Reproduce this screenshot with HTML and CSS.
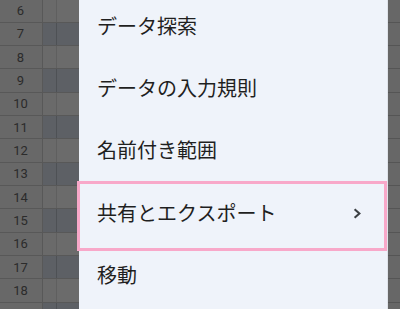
FILE: index.html
```html
<!DOCTYPE html>
<html lang="ja">
<head>
<meta charset="utf-8">
<link rel="stylesheet" href="styles.css">
</head>
<body>
<div class="screen">
  <div class="sheet">
    <div class="row"><div class="hdr">6</div><div class="ca"></div><div class="cb"></div></div>
    <div class="row dark"><div class="hdr">7</div><div class="ca"></div><div class="cb"></div></div>
    <div class="row"><div class="hdr">8</div><div class="ca"></div><div class="cb"></div></div>
    <div class="row dark"><div class="hdr">9</div><div class="ca"></div><div class="cb"></div></div>
    <div class="row"><div class="hdr">10</div><div class="ca"></div><div class="cb"></div></div>
    <div class="row dark"><div class="hdr">11</div><div class="ca"></div><div class="cb"></div></div>
    <div class="row"><div class="hdr">12</div><div class="ca"></div><div class="cb"></div></div>
    <div class="row dark"><div class="hdr">13</div><div class="ca"></div><div class="cb"></div></div>
    <div class="row"><div class="hdr">14</div><div class="ca"></div><div class="cb"></div></div>
    <div class="row dark"><div class="hdr">15</div><div class="ca"></div><div class="cb"></div></div>
    <div class="row"><div class="hdr">16</div><div class="ca"></div><div class="cb"></div></div>
    <div class="row dark"><div class="hdr">17</div><div class="ca"></div><div class="cb"></div></div>
    <div class="row"><div class="hdr">18</div><div class="ca"></div><div class="cb"></div></div>
    <div class="row dark"><div class="hdr"></div><div class="ca"></div><div class="cb"></div></div>
  </div>
  <div class="menu">
    <ul class="items">
      <li class="item">データ探索</li>
      <li class="item">データの入力規則</li>
      <li class="item">名前付き範囲</li>
      <li class="item">共有とエクスポート
        <svg class="chev" viewBox="0 0 9 11" width="9" height="11"><polyline points="1.6,1.2 6.4,5.5 1.6,9.8" fill="none" stroke="#3c4043" stroke-width="2.1"/></svg>
      </li>
      <li class="item">移動</li>
    </ul>
    <div class="highlight"></div>
  </div>
  <div class="strip">
    <div class="srow"></div><div class="srow"></div><div class="srow"></div><div class="srow"></div>
    <div class="srow"></div><div class="srow"></div><div class="srow"></div><div class="srow"></div>
    <div class="srow"></div><div class="srow"></div><div class="srow"></div><div class="srow"></div>
    <div class="srow"></div><div class="srow"></div>
  </div>
</div>
</body>
</html>
```

FILE: styles.css
```css
html, body {
  margin: 0;
  padding: 0;
  width: 400px;
  height: 309px;
  overflow: hidden;
  background: #676767;
}

.screen {
  display: flex;
  width: 400px;
  height: 309px;
  overflow: hidden;
}

.sheet {
  width: 79px;
  flex: none;
  margin-top: -0.67px;
}

.row {
  display: grid;
  grid-template-columns: 43px 14px 22px;
  height: 23.333px;
  box-sizing: border-box;
  border-bottom: 1px solid #585858;
}

.hdr {
  background: #686868;
  border-right: 1px solid #585858;
  color: #2b2b2b;
  font-family: Roboto, "Liberation Sans", sans-serif;
  font-size: 13px;
  display: flex;
  align-items: center;
  justify-content: center;
  padding-right: 1px;
}

.ca {
  background: #6a6a6a;
  border-right: 1px solid #5f5f5f;
}

.cb {
  background: #6b6b6b;
}

.row.dark .ca {
  background: #5d6065;
  border-right-color: #4e5155;
}

.row.dark .cb {
  background: #5d6065;
}

.menu {
  position: relative;
  width: 308px;
  flex: none;
  background: #eff3fa;
  border-right: 1px solid #dfe3ea;
  font-family: "Noto Sans CJK JP", sans-serif;
  color: #1f1f1f;
}

.items {
  list-style: none;
  margin: -6px 0 0;
  padding: 0;
}

.item {
  display: flex;
  align-items: center;
  height: 62.4px;
  padding: 0 25px 0 18px;
  font-size: 20px;
  white-space: nowrap;
}

.chev {
  margin-left: auto;
  margin-top: 3px;
}

.highlight {
  position: absolute;
  left: -2px;
  top: 181px;
  width: 310px;
  height: 70px;
  box-sizing: border-box;
  border: 3px solid #f8a8c9;
}

.strip {
  flex: 1;
  background: #676767;
  margin-top: -0.67px;
}

.srow {
  height: 23.333px;
  box-sizing: border-box;
  border-bottom: 1px solid #555555;
}
```
